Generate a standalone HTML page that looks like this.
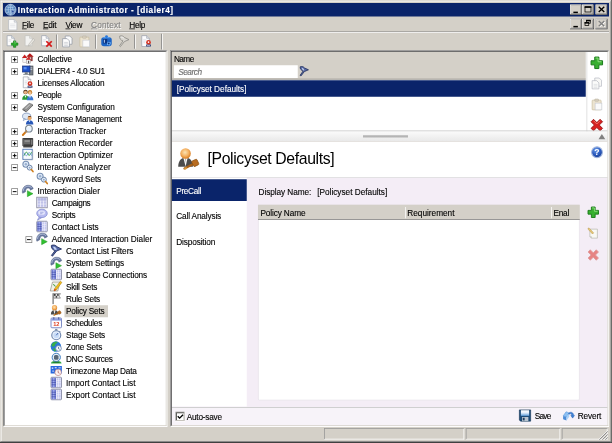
<!DOCTYPE html>
<html><head><meta charset="utf-8"><title>Interaction Administrator - [dialer4]</title>
<style>
html,body{margin:0;padding:0;background:#D4D0C8;}
body{width:612px;height:443px;overflow:hidden;position:relative;}
#w{position:absolute;left:0;top:0;width:816px;height:591px;transform:scale(.75);transform-origin:0 0;font-family:"Liberation Sans",sans-serif;font-size:11px;color:#000;overflow:hidden;}
.t{position:absolute;white-space:nowrap;-webkit-text-stroke:0.15px currentColor;}
.b{font-weight:bold;}
.ic{position:absolute;overflow:visible;}
u{text-decoration:underline;}
</style></head>
<body><div id="w">
<div class="" style="position:absolute;left:0.00px;top:0.00px;width:816.00px;height:591.00px;background:#D4D0C8;"></div>
<div class="" style="position:absolute;left:0.00px;top:0.00px;width:816.00px;height:1.00px;background:#D4D0C8"></div>
<div class="" style="position:absolute;left:0.00px;top:0.00px;width:1.00px;height:591.00px;background:#D4D0C8"></div>
<div class="" style="position:absolute;left:1.00px;top:1.00px;width:814.00px;height:1.00px;background:#fff"></div>
<div class="" style="position:absolute;left:1.00px;top:1.00px;width:1.00px;height:589.00px;background:#fff"></div>
<div class="" style="position:absolute;left:0.00px;top:588.70px;width:816.00px;height:2.50px;background:#404040"></div>
<div class="" style="position:absolute;left:815.00px;top:0.00px;width:1.00px;height:591.00px;background:#404040"></div>
<div class="" style="position:absolute;left:1.00px;top:587.50px;width:814.00px;height:1.20px;background:#808080"></div>
<div class="" style="position:absolute;left:814.00px;top:1.00px;width:1.00px;height:589.00px;background:#808080"></div>
<div class="" style="position:absolute;left:4.00px;top:4.00px;width:808.00px;height:18.00px;background:#0A246A;"></div>
<svg class="ic" style="left:6px;top:5px" width="16" height="16" viewBox="0 0 16 16" ><circle cx="8" cy="8" r="7.300" fill="#5888c0" stroke="#c8d8ec" stroke-width="1"/><path d="M1 8h14M8 1v14M2.500 4c3 1.500 8 1.500 11 0M2.500 12c3-1.500 8-1.500 11 0M8 1c-4 3-4 11 0 14M8 1c4 3 4 11 0 14" stroke="#b8d0ec" stroke-width=".8" fill="none"/><path d="M9 8l5 2-2 1 1.500 2.500-1 .5-1.500-2.500-1.500 1.500z" fill="#2c50a0" stroke="#fff" stroke-width=".4"/></svg>
<span class="t b" id="t0" style="left:23.50px;top:5.20px;line-height:16px;color:#fff;letter-spacing:0.659px;">Interaction Administrator - [dialer4]</span>
<svg class="ic" style="left:760px;top:6px" width="16" height="14" viewBox="0 0 16 14"><rect width="16" height="14" fill="#404040"/><rect width="15" height="13" fill="#fff"/><rect x="1" y="1" width="14" height="12" fill="#808080"/><rect x="1" y="1" width="13" height="11" fill="#D4D0C8"/><g transform="translate(1.500,0.500)"><rect x="3" y="9" width="6" height="2" fill="#000"/></g></svg>
<svg class="ic" style="left:776px;top:6px" width="16" height="14" viewBox="0 0 16 14"><rect width="16" height="14" fill="#404040"/><rect width="15" height="13" fill="#fff"/><rect x="1" y="1" width="14" height="12" fill="#808080"/><rect x="1" y="1" width="13" height="11" fill="#D4D0C8"/><g transform="translate(1.500,0.500)"><rect x="2.500" y="2.500" width="8" height="7" fill="none" stroke="#000"/><rect x="2" y="2" width="9" height="2" fill="#000"/></g></svg>
<svg class="ic" style="left:794px;top:6px" width="16" height="14" viewBox="0 0 16 14"><rect width="16" height="14" fill="#404040"/><rect width="15" height="13" fill="#fff"/><rect x="1" y="1" width="14" height="12" fill="#808080"/><rect x="1" y="1" width="13" height="11" fill="#D4D0C8"/><g transform="translate(1.500,0.500)"><path d="M2.800 2.600l7.400 6.800M10.200 2.600l-7.400 6.800" stroke="#000" stroke-width="1.800"/></g></svg>
<svg class="ic" style="left:8.5px;top:24.5px" width="16" height="16" viewBox="0 0 16 16" ><path d="M2.500 1h7.500l3.500 3.500V15h-11z" fill="#fbfbfb" stroke="#b0b4bc" stroke-width=".9"/><path d="M10 1v3.500h3.500" fill="#e4e6ea" stroke="#b0b4bc" stroke-width=".8"/><path d="M4.500 7h7M4.500 9h7M4.500 11h7" stroke="#dcdee2" stroke-width=".9"/></svg>
<span class="t " id="t1" style="left:29.30px;top:24.70px;line-height:16px;letter-spacing:-0.417px;"><u>F</u>ile</span>
<span class="t " id="t2" style="left:57.30px;top:24.70px;line-height:16px;letter-spacing:-0.323px;"><u>E</u>dit</span>
<span class="t " id="t3" style="left:87.30px;top:24.70px;line-height:16px;letter-spacing:-0.385px;"><u>V</u>iew</span>
<span class="t " id="t4" style="left:121.30px;top:24.70px;line-height:16px;color:#808080;text-shadow:1px 1px 0 #fff;letter-spacing:0.263px;"><u>C</u>ontext</span>
<span class="t " id="t5" style="left:172.30px;top:24.70px;line-height:16px;letter-spacing:-0.380px;"><u>H</u>elp</span>
<svg class="ic" style="left:759.5px;top:25.3px" width="16" height="14" viewBox="0 0 16 14"><rect width="16" height="14" fill="#404040"/><rect width="15" height="13" fill="#fff"/><rect x="1" y="1" width="14" height="12" fill="#808080"/><rect x="1" y="1" width="13" height="11" fill="#D4D0C8"/><g transform="translate(1.500,0.500)"><rect x="3" y="9" width="6" height="2" fill="#000"/></g></svg>
<svg class="ic" style="left:775.5px;top:25.3px" width="16" height="14" viewBox="0 0 16 14"><rect width="16" height="14" fill="#404040"/><rect width="15" height="13" fill="#fff"/><rect x="1" y="1" width="14" height="12" fill="#808080"/><rect x="1" y="1" width="13" height="11" fill="#D4D0C8"/><g transform="translate(1.500,0.500)"><rect x="4.500" y="1.500" width="5" height="4" fill="none" stroke="#000"/><rect x="4" y="1" width="6" height="2" fill="#000"/><rect x="2.500" y="4.500" width="5" height="4" fill="#D4D0C8" stroke="#000"/><rect x="2" y="4" width="6" height="2" fill="#000"/></g></svg>
<svg class="ic" style="left:793.5px;top:25.3px" width="16" height="14" viewBox="0 0 16 14"><rect width="16" height="14" fill="#404040"/><rect width="15" height="13" fill="#fff"/><rect x="1" y="1" width="14" height="12" fill="#808080"/><rect x="1" y="1" width="13" height="11" fill="#D4D0C8"/><g transform="translate(1.500,0.500)"><path d="M3.800 3.600l7.400 6.800M11.200 3.600l-7.400 6.800" stroke="#fff" stroke-width="1.500"/><path d="M2.800 2.600l7.400 6.800M10.200 2.600l-7.400 6.800" stroke="#808080" stroke-width="1.800"/></g></svg>
<div class="" style="position:absolute;left:4.00px;top:42.00px;width:808.00px;height:1.00px;background:#808080"></div>
<div class="" style="position:absolute;left:4.00px;top:43.00px;width:808.00px;height:1.00px;background:#fff"></div>
<svg class="ic" style="left:9.3px;top:47px" width="16" height="16" viewBox="0 0 16 16" ><path d="M0.500 0.500h6l3.500 3.500v10h-9.500z" fill="#fcfcfc" stroke="#98a0ac" stroke-width=".9"/><path d="M6.500 0.500v3.500h3.500" fill="#e0e4ea" stroke="#98a0ac" stroke-width=".8"/><path d="M2.500 6h4M2.500 8h3" stroke="#d0d4da" stroke-width=".8"/><path d="M9 7.500h3v2.800h2.800v3H12v2.800H9v-2.800H6.200v-3H9z" fill="#2cac2c" stroke="#107410" stroke-width=".8" stroke-linejoin="round"/><path d="M9.800 8.500h1.300v2.700" stroke="#90e890" stroke-width=".8" fill="none"/></svg>
<svg class="ic" style="left:33.3px;top:47px" width="16" height="16" viewBox="0 0 16 16" ><path d="M0.500 0.500h6l3.500 3.500v10h-9.500z" fill="#f2f2f0" stroke="#c0c0bc" stroke-width=".9"/><path d="M6.500 0.500v3.500h3.500" fill="#e6e6e2" stroke="#c0c0bc" stroke-width=".8"/><path d="M11.500 4.500l2 1.800-6 7-2.700 1.200.8-2.800z" fill="#e8e6e0" stroke="#b4b2ac" stroke-width=".8"/></svg>
<svg class="ic" style="left:55px;top:47px" width="16" height="16" viewBox="0 0 16 16" ><path d="M0.500 0.500h6l3.500 3.500v10h-9.500z" fill="#fcfcfc" stroke="#98a0ac" stroke-width=".9"/><path d="M6.500 0.500v3.500h3.500" fill="#e0e4ea" stroke="#98a0ac" stroke-width=".8"/><path d="M2.500 6h4M2.500 8h3" stroke="#d0d4da" stroke-width=".8"/><path d="M6.800 8l7.200 7.200M14 8l-7.200 7.200" stroke="#d41818" stroke-width="2.300"/></svg>
<svg class="ic" style="left:82px;top:47px" width="16" height="16" viewBox="0 0 16 16" ><path d="M5 1h6l3 3v8H5z" fill="#fbfbfb" stroke="#8c94a0" stroke-width=".9"/><path d="M1.500 4.500h6l3 3v8h-9z" fill="#fdfdfd" stroke="#8c94a0" stroke-width=".9"/><path d="M3.500 9.500h5M3.500 11.500h5M3.500 13.500h5" stroke="#b8bcc4" stroke-width=".8"/></svg>
<svg class="ic" style="left:105.3px;top:47px" width="16" height="16" viewBox="0 0 16 16" ><rect x="1.500" y="2.500" width="12" height="13" rx="1" fill="#ece4d0" stroke="#c8bc9c" stroke-width=".9"/><rect x="5" y="1" width="5" height="3" rx=".8" fill="#d8d0c0" stroke="#b8b0a0" stroke-width=".7"/><rect x="5.500" y="6.500" width="9" height="9" fill="#fafafa" stroke="#c4c8d0" stroke-width=".8"/></svg>
<svg class="ic" style="left:134px;top:47px" width="16" height="16" viewBox="0 0 16 16" ><rect x="1" y="2.500" width="14" height="12" rx="3.500" fill="#1c64c4"/><path d="M3 4c2-3 8-3 10 0" fill="#58a0f0"/><rect x="3.500" y="5" width="5.500" height="6" rx=".8" fill="#0c3480"/><rect x="4.500" y="6" width="1.300" height="4" fill="#b8d4f8"/><path d="M9.500 8.500l4.500 1-1.500 4-4-1z" fill="#78b8f8"/><circle cx="11" cy="11" r="1.300" fill="#0c3480"/><circle cx="8" cy="1.800" r="1.800" fill="#2c78d8"/></svg>
<svg class="ic" style="left:157.5px;top:47px" width="16" height="16" viewBox="0 0 16 16" ><path d="M1.500 1.200C4 0.200 6.500 1 8 3l6 2.800-6.200 2.700L2.500 15.200l-1.200-1L6 7.500C3 7 1 4 1.500 1.200z" fill="#d8d6d0" stroke="#8c8a86" stroke-width="1.100"/><path d="M3 2.500c1.500-.3 3 .3 4 1.500" stroke="#f8f8f8" stroke-width="1" fill="none"/></svg>
<svg class="ic" style="left:186.5px;top:47px" width="16" height="16" viewBox="0 0 16 16" ><path d="M2 0.500h6.500l3.500 3.500v11H2z" fill="#fbfbfd" stroke="#989ca8" stroke-width=".9"/><path d="M8.500 0.500v3.500h3.500" fill="#dfe3e8" stroke="#989ca8" stroke-width=".8"/><path d="M4 6h4M4 8h3M4 10h2.500" stroke="#d0d4dc" stroke-width=".8"/><circle cx="11" cy="9.500" r="3.200" fill="#d43424"/><circle cx="11" cy="9.200" r="1.100" fill="#fff"/><rect x="7.800" y="12.300" width="6.500" height="2.700" fill="#404c7c"/><rect x="9" y="13" width="4" height="1" fill="#b8c0e0"/></svg>
<div class="" style="position:absolute;left:75.00px;top:45.50px;width:1.00px;height:19.50px;background:#808080"></div>
<div class="" style="position:absolute;left:76.00px;top:45.50px;width:1.00px;height:19.50px;background:#fff"></div>
<div class="" style="position:absolute;left:126.70px;top:45.50px;width:1.00px;height:19.50px;background:#808080"></div>
<div class="" style="position:absolute;left:127.70px;top:45.50px;width:1.00px;height:19.50px;background:#fff"></div>
<div class="" style="position:absolute;left:178.70px;top:45.50px;width:1.00px;height:19.50px;background:#808080"></div>
<div class="" style="position:absolute;left:179.70px;top:45.50px;width:1.00px;height:19.50px;background:#fff"></div>
<div class="" style="position:absolute;left:215.00px;top:44.50px;width:1.00px;height:21.00px;background:#808080"></div>
<div class="" style="position:absolute;left:216.00px;top:44.50px;width:1.00px;height:21.00px;background:#fff"></div>
<div class="" style="position:absolute;left:4.00px;top:66.70px;width:218.70px;height:502.00px;background:#fff;border-top:1px solid #808080;border-left:1px solid #808080;border-bottom:1px solid #fff;border-right:1px solid #fff;box-sizing:border-box;"></div>
<div class="" style="position:absolute;left:5.00px;top:67.70px;width:216.70px;height:500.00px;border-top:1px solid #404040;border-left:1px solid #404040;border-bottom:1px solid #D4D0C8;border-right:1px solid #D4D0C8;box-sizing:border-box;"></div>
<svg class="ic" style="left:15px;top:74.67px" width="9" height="9" viewBox="0 0 9 9"><rect x=".5" y=".5" width="8" height="8" fill="#fff" stroke="#808080"/><path d="M2 4.500h5" stroke="#000" stroke-width="1.300"/><path d="M4.500 2v5" stroke="#000" stroke-width="1.300"/></svg>
<svg class="ic" style="left:29.3px;top:70.36666666666666px" width="16" height="16" viewBox="0 0 16 16" ><rect x="8.500" y="5" width="6" height="6.500" fill="#8c3838"/><rect x="10.500" y="6.500" width="2" height="2.500" fill="#e8d8d8"/><path d="M6 5.800L10.800 1 16 5.800z" fill="#b41818"/><rect x="1.500" y="6.500" width="4.800" height="6.500" fill="#f6f6f6" stroke="#a8a0a0" stroke-width=".6"/><path d="M0.300 7.200L3.800 2.800 7.500 7.200z" fill="#c82020"/><rect x="6.500" y="9" width="5" height="5.500" fill="#f2f2f2" stroke="#989090" stroke-width=".6"/><rect x="8.300" y="11" width="1.600" height="3.500" fill="#585050"/><path d="M5.300 9.600L9 5.800 12.800 9.600z" fill="#d42c2c"/></svg>
<span class="t " id="t6" style="left:50.00px;top:70.67px;line-height:16px;letter-spacing:-0.188px;">Collective</span>
<svg class="ic" style="left:15px;top:90.67px" width="9" height="9" viewBox="0 0 9 9"><rect x=".5" y=".5" width="8" height="8" fill="#fff" stroke="#808080"/><path d="M2 4.500h5" stroke="#000" stroke-width="1.300"/><path d="M4.500 2v5" stroke="#000" stroke-width="1.300"/></svg>
<svg class="ic" style="left:29.3px;top:86.36666666666666px" width="16" height="16" viewBox="0 0 16 16" ><rect x="10" y="2" width="5" height="12" fill="#7a8088" stroke="#40454c" stroke-width=".8"/><rect x="11" y="4" width="3" height="1" fill="#cfd6de"/><rect x="11" y="6" width="3" height="1" fill="#cfd6de"/><rect x="1" y="2" width="10" height="8" fill="#1c50c8" stroke="#203880" stroke-width="1"/><rect x="2.5" y="3.5" width="4" height="3" fill="#5a90f0"/><rect x="4" y="10.5" width="4" height="2" fill="#606870"/><rect x="2" y="12.5" width="8" height="1.5" fill="#9098a0"/></svg>
<span class="t " id="t7" style="left:50.00px;top:86.67px;line-height:16px;letter-spacing:-0.336px;">DIALER4 - 4.0 SU1</span>
<svg class="ic" style="left:29.3px;top:102.36666666666666px" width="16" height="16" viewBox="0 0 16 16" ><path d="M2 0.500h6.500l3.500 3.500v11H2z" fill="#fbfbfd" stroke="#989ca8" stroke-width=".9"/><path d="M8.500 0.500v3.500h3.500" fill="#dfe3e8" stroke="#989ca8" stroke-width=".8"/><path d="M4 6h4M4 8h3M4 10h2.500" stroke="#d0d4dc" stroke-width=".8"/><circle cx="11" cy="9.500" r="3.200" fill="#d43424"/><circle cx="11" cy="9.200" r="1.100" fill="#fff"/><rect x="7.800" y="12.300" width="6.500" height="2.700" fill="#404c7c"/><rect x="9" y="13" width="4" height="1" fill="#b8c0e0"/></svg>
<span class="t " id="t8" style="left:50.00px;top:102.67px;line-height:16px;letter-spacing:-0.237px;">Licenses Allocation</span>
<svg class="ic" style="left:15px;top:122.67px" width="9" height="9" viewBox="0 0 9 9"><rect x=".5" y=".5" width="8" height="8" fill="#fff" stroke="#808080"/><path d="M2 4.500h5" stroke="#000" stroke-width="1.300"/><path d="M4.500 2v5" stroke="#000" stroke-width="1.300"/></svg>
<svg class="ic" style="left:29.3px;top:118.36666666666666px" width="16" height="16" viewBox="0 0 16 16" ><circle cx="5" cy="4.5" r="3" fill="#5a3a20"/><circle cx="5" cy="5.2" r="2.1" fill="#e8b080"/><path d="M0.5 15c0-4 2-6 4.5-6s4.5 2 4.5 6z" fill="#2c9a38"/><path d="M4 9.5l1 3 1-3z" fill="#fff"/><circle cx="11" cy="5" r="2.9" fill="#c07820"/><circle cx="11" cy="5.8" r="2" fill="#f0c090"/><path d="M6.8 15.5c0-4 2-6 4.3-6s4.4 2 4.4 6z" fill="#3a78d0"/><path d="M10 10l1 3 1-3z" fill="#fff"/></svg>
<span class="t " id="t9" style="left:50.00px;top:118.67px;line-height:16px;letter-spacing:-0.393px;">People</span>
<svg class="ic" style="left:15px;top:138.67px" width="9" height="9" viewBox="0 0 9 9"><rect x=".5" y=".5" width="8" height="8" fill="#fff" stroke="#808080"/><path d="M2 4.500h5" stroke="#000" stroke-width="1.300"/><path d="M4.500 2v5" stroke="#000" stroke-width="1.300"/></svg>
<svg class="ic" style="left:29.3px;top:134.36666666666665px" width="16" height="16" viewBox="0 0 16 16" ><path d="M1 11L10 3l5 2-9 9z" fill="#8c8c8c"/><path d="M1 11l5 3v1.5l-5-3z" fill="#4c4c4c"/><path d="M6 14l9-9v1.5l-9 9z" fill="#606060"/><path d="M4 10.5l6-5.500 2 .8-6 5.600z" fill="#b8b8b8"/></svg>
<span class="t " id="t10" style="left:50.00px;top:134.67px;line-height:16px;letter-spacing:-0.099px;">System Configuration</span>
<svg class="ic" style="left:29.3px;top:150.36666666666665px" width="16" height="16" viewBox="0 0 16 16" ><ellipse cx="6.500" cy="5" rx="5.5" ry="4.200" fill="#dfe8f4" stroke="#7088b0" stroke-width=".9"/><path d="M3 8l-1 3 3-2z" fill="#dfe8f4" stroke="#7088b0" stroke-width=".7"/><circle cx="10.5" cy="7.500" r="2.600" fill="#e8a868"/><path d="M8 6.500c.5-2.500 4.500-2.500 5 0-1.500-.8-3.500-.8-5 0z" fill="#70401c"/><path d="M5.500 16c0-4 2.200-5.800 5-5.800s5 1.800 5 5.800z" fill="#2858b8"/><path d="M9.500 10.500l1 2.500 1-2.500z" fill="#fff"/></svg>
<span class="t " id="t11" style="left:50.00px;top:150.67px;line-height:16px;letter-spacing:-0.250px;">Response Management</span>
<svg class="ic" style="left:15px;top:170.67px" width="9" height="9" viewBox="0 0 9 9"><rect x=".5" y=".5" width="8" height="8" fill="#fff" stroke="#808080"/><path d="M2 4.500h5" stroke="#000" stroke-width="1.300"/><path d="M4.500 2v5" stroke="#000" stroke-width="1.300"/></svg>
<svg class="ic" style="left:29.3px;top:166.36666666666665px" width="16" height="16" viewBox="0 0 16 16" ><circle cx="9.500" cy="5.500" r="4.500" fill="#e8f2fc" stroke="#7c8894" stroke-width="1.500"/><path d="M7 4a3 3 0 0 1 3-1.500" stroke="#fff" stroke-width="1.200" fill="none"/><path d="M6 9.200L1.500 14" stroke="#d07818" stroke-width="2.600" stroke-linecap="round"/><path d="M6.200 8.800L4.800 10.400" stroke="#8c8c8c" stroke-width="2.200"/></svg>
<span class="t " id="t12" style="left:50.00px;top:166.67px;line-height:16px;letter-spacing:0.034px;">Interaction Tracker</span>
<svg class="ic" style="left:15px;top:186.67px" width="9" height="9" viewBox="0 0 9 9"><rect x=".5" y=".5" width="8" height="8" fill="#fff" stroke="#808080"/><path d="M2 4.500h5" stroke="#000" stroke-width="1.300"/><path d="M4.500 2v5" stroke="#000" stroke-width="1.300"/></svg>
<svg class="ic" style="left:29.3px;top:182.36666666666665px" width="16" height="16" viewBox="0 0 16 16" ><rect x=".8" y="2" width="14.400" height="11" rx="1" fill="#3c3c3c"/><rect x="3" y="4" width="8.500" height="6.500" fill="#6c6c6c"/><rect x="3.800" y="4.800" width="7" height="2.500" fill="#909090"/><rect x="12.500" y="4" width="1.700" height="7" fill="#888"/><rect x="2" y="13" width="12" height="1.500" fill="#1c1c1c"/><rect x="1" y="3" width="1.200" height="9" fill="#9a9a9a"/></svg>
<span class="t " id="t13" style="left:50.00px;top:182.67px;line-height:16px;letter-spacing:0.017px;">Interaction Recorder</span>
<svg class="ic" style="left:15px;top:202.67px" width="9" height="9" viewBox="0 0 9 9"><rect x=".5" y=".5" width="8" height="8" fill="#fff" stroke="#808080"/><path d="M2 4.500h5" stroke="#000" stroke-width="1.300"/><path d="M4.500 2v5" stroke="#000" stroke-width="1.300"/></svg>
<svg class="ic" style="left:29.3px;top:198.36666666666665px" width="16" height="16" viewBox="0 0 16 16" ><rect x="1.500" y="1" width="12.500" height="13.500" fill="#f8fbfe" stroke="#4c74b4" stroke-width="1.200"/><path d="M14.600 2.500v12.600H3" stroke="#a8b0bc" stroke-width="1" fill="none"/><path d="M3 9.500c2-5.500 4-5.500 5-2.500s3 3 5-2" stroke="#30a040" stroke-width="1.300" fill="none"/><path d="M3 5.500c2 5 4 5 5 2s3-3 5 2" stroke="#5888d0" stroke-width="1" fill="none"/></svg>
<span class="t " id="t14" style="left:50.00px;top:198.67px;line-height:16px;letter-spacing:-0.039px;">Interaction Optimizer</span>
<svg class="ic" style="left:15px;top:218.67px" width="9" height="9" viewBox="0 0 9 9"><rect x=".5" y=".5" width="8" height="8" fill="#fff" stroke="#808080"/><path d="M2 4.500h5" stroke="#000" stroke-width="1.300"/></svg>
<svg class="ic" style="left:29.3px;top:214.36666666666665px" width="16" height="16" viewBox="0 0 16 16" ><circle cx="5.500" cy="5" r="4" fill="#dce8f6" stroke="#7890b4" stroke-width="1.400"/><circle cx="5.500" cy="5" r="1.600" fill="#9ab0d0"/><circle cx="10.500" cy="9.500" r="3.300" fill="#e4eef8" stroke="#6c84a8" stroke-width="1.300"/><circle cx="10.500" cy="9.500" r="1.200" fill="#8ca4c8"/><path d="M12.800 12l2.200 2.700" stroke="#d08020" stroke-width="2.200" stroke-linecap="round"/></svg>
<span class="t " id="t15" style="left:50.00px;top:214.67px;line-height:16px;letter-spacing:0.057px;">Interaction Analyzer</span>
<svg class="ic" style="left:48.3px;top:230.36666666666665px" width="16" height="16" viewBox="0 0 16 16" ><circle cx="5.500" cy="5" r="4" fill="#dce8f6" stroke="#7890b4" stroke-width="1.400"/><circle cx="5.500" cy="5" r="1.600" fill="#9ab0d0"/><circle cx="10.500" cy="9.500" r="3.300" fill="#e4eef8" stroke="#6c84a8" stroke-width="1.300"/><circle cx="10.500" cy="9.500" r="1.200" fill="#8ca4c8"/><path d="M12.800 12l2.200 2.700" stroke="#d08020" stroke-width="2.200" stroke-linecap="round"/></svg>
<span class="t " id="t16" style="left:69.00px;top:230.67px;line-height:16px;letter-spacing:-0.170px;">Keyword Sets</span>
<svg class="ic" style="left:15px;top:250.67px" width="9" height="9" viewBox="0 0 9 9"><rect x=".5" y=".5" width="8" height="8" fill="#fff" stroke="#808080"/><path d="M2 4.500h5" stroke="#000" stroke-width="1.300"/></svg>
<svg class="ic" style="left:29.3px;top:246.36666666666665px" width="16" height="16" viewBox="0 0 16 16" ><path d="M0.800 10.500C0.500 4.500 4 1 8.500 1c3.500 0 6 1.500 6.800 4.500l-3.800 2c-.3-1.800-1.300-2.800-3-2.800-2.200 0-3.500 1.800-3.500 5l-3.800 2z" fill="#6878a0" stroke="#485878" stroke-width=".6"/><path d="M2 8.500c.2-3.800 2.800-6.300 6.300-6.300 2 0 3.800.7 5 2.300" stroke="#b0bcd8" stroke-width="1.300" fill="none"/><path d="M7.500 8.200l7.500 4-7.500 4z" fill="#30c030" stroke="#189018" stroke-width=".6"/></svg>
<span class="t " id="t17" style="left:50.00px;top:246.67px;line-height:16px;letter-spacing:0.008px;">Interaction Dialer</span>
<svg class="ic" style="left:48.3px;top:262.3666666666666px" width="16" height="16" viewBox="0 0 16 16" ><rect x="1" y="1" width="14" height="14" fill="#fdfdff" stroke="#8c8ca4" stroke-width="1.200"/><g fill="#c0c2ea"><rect x="2.200" y="2.200" width="3.400" height="3.400"/><rect x="6.300" y="2.200" width="3.400" height="3.400"/><rect x="10.400" y="2.200" width="3.400" height="3.400"/><rect x="2.200" y="6.300" width="3.400" height="3.400"/><rect x="6.300" y="6.300" width="3.400" height="3.400"/><rect x="10.400" y="6.300" width="3.400" height="3.400"/><rect x="2.200" y="10.400" width="3.400" height="3.400"/><rect x="6.300" y="10.400" width="3.400" height="3.400"/><rect x="10.400" y="10.400" width="3.400" height="3.400"/></g><rect x="2.200" y="2.200" width="11.600" height="3.400" fill="#a8acdc" opacity=".6"/></svg>
<span class="t " id="t18" style="left:69.00px;top:262.67px;line-height:16px;letter-spacing:-0.455px;">Campaigns</span>
<svg class="ic" style="left:48.3px;top:278.3666666666666px" width="16" height="16" viewBox="0 0 16 16" ><path d="M4 11.500l-2 4 5.500-3.200z" fill="#b4b8ec" stroke="#8088cc" stroke-width=".9"/><ellipse cx="8" cy="6.500" rx="7" ry="5.600" fill="#b8bcf0" stroke="#8890d4" stroke-width="1.100"/><ellipse cx="7.500" cy="5.500" rx="4.500" ry="3" fill="#e4e6fc"/><path d="M5.500 5h4.500M5.500 7h3" stroke="#8890d4" stroke-width=".9"/></svg>
<span class="t " id="t19" style="left:69.00px;top:278.67px;line-height:16px;letter-spacing:-0.271px;">Scripts</span>
<svg class="ic" style="left:48.3px;top:294.3666666666666px" width="16" height="16" viewBox="0 0 16 16" ><rect x="1" y="1" width="14" height="14" rx="1" fill="#f4f4fc" stroke="#7c809c" stroke-width="1.100"/><rect x="1.800" y="1.800" width="5.700" height="12.400" fill="#5c68c8"/><rect x="3.200" y="1.800" width="2.600" height="12.400" fill="#9ca8ec"/><path d="M1.800 5h5.700M1.800 8h5.700M1.800 11h5.700" stroke="#3c48a0" stroke-width=".8"/><g fill="#c4c8f0"><rect x="8.500" y="2.300" width="5.500" height="2.600"/><rect x="8.500" y="5.500" width="5.500" height="2.600"/><rect x="8.500" y="8.700" width="5.500" height="2.600"/><rect x="8.500" y="11.800" width="5.500" height="2"/></g><rect x="10.900" y="1.800" width=".8" height="12.400" fill="#f4f4fc"/></svg>
<span class="t " id="t20" style="left:69.00px;top:294.67px;line-height:16px;letter-spacing:-0.091px;">Contact Lists</span>
<svg class="ic" style="left:34px;top:314.67px" width="9" height="9" viewBox="0 0 9 9"><rect x=".5" y=".5" width="8" height="8" fill="#fff" stroke="#808080"/><path d="M2 4.500h5" stroke="#000" stroke-width="1.300"/></svg>
<svg class="ic" style="left:48.3px;top:310.3666666666666px" width="16" height="16" viewBox="0 0 16 16" ><path d="M0.800 10.500C0.500 4.500 4 1 8.500 1c3.500 0 6 1.500 6.800 4.500l-3.800 2c-.3-1.800-1.300-2.800-3-2.800-2.200 0-3.500 1.800-3.500 5l-3.800 2z" fill="#6878a0" stroke="#485878" stroke-width=".6"/><path d="M2 8.500c.2-3.800 2.800-6.300 6.300-6.300 2 0 3.800.7 5 2.300" stroke="#b0bcd8" stroke-width="1.300" fill="none"/><path d="M7.500 8.200l7.500 4-7.500 4z" fill="#30c030" stroke="#189018" stroke-width=".6"/></svg>
<span class="t " id="t21" style="left:69.00px;top:310.67px;line-height:16px;letter-spacing:-0.044px;">Advanced Interaction Dialer</span>
<svg class="ic" style="left:67.3px;top:326.3666666666666px" width="16" height="16" viewBox="0 0 16 16" ><path d="M1.500 1.200C4.500 0 7.500 1 9 3l6 3-6.500 2.700L3 15.500l-1.400-1L6.500 8C3 7.500 1 4.500 1.500 1.200z" fill="#5468a8" stroke="#263260" stroke-width="1.200"/><path d="M3.500 3c1.800-.5 3.200.3 4.200 1.500l1.300 2.300-3 .5z" fill="#c4d2f2"/></svg>
<span class="t " id="t22" style="left:88.00px;top:326.67px;line-height:16px;letter-spacing:-0.058px;">Contact List Filters</span>
<svg class="ic" style="left:67.3px;top:342.3666666666666px" width="16" height="16" viewBox="0 0 16 16" ><path d="M0.800 10.500C0.500 4.500 4 1 8.500 1c3.500 0 6 1.500 6.800 4.500l-3.800 2c-.3-1.800-1.300-2.800-3-2.800-2.200 0-3.500 1.800-3.500 5l-3.800 2z" fill="#6878a0" stroke="#485878" stroke-width=".6"/><path d="M2 8.500c.2-3.800 2.800-6.300 6.300-6.300 2 0 3.800.7 5 2.300" stroke="#b0bcd8" stroke-width="1.300" fill="none"/><path d="M7.500 8.200l7.500 4-7.500 4z" fill="#30c030" stroke="#189018" stroke-width=".6"/></svg>
<span class="t " id="t23" style="left:88.00px;top:342.67px;line-height:16px;letter-spacing:-0.142px;">System Settings</span>
<svg class="ic" style="left:67.3px;top:358.3666666666666px" width="16" height="16" viewBox="0 0 16 16" ><rect x="1" y="1" width="14" height="14" rx="1" fill="#f4f4fc" stroke="#7c809c" stroke-width="1.100"/><rect x="1.800" y="1.800" width="5.700" height="12.400" fill="#5c68c8"/><rect x="3.200" y="1.800" width="2.600" height="12.400" fill="#9ca8ec"/><path d="M1.800 5h5.700M1.800 8h5.700M1.800 11h5.700" stroke="#3c48a0" stroke-width=".8"/><g fill="#c4c8f0"><rect x="8.500" y="2.300" width="5.500" height="2.600"/><rect x="8.500" y="5.500" width="5.500" height="2.600"/><rect x="8.500" y="8.700" width="5.500" height="2.600"/><rect x="8.500" y="11.800" width="5.500" height="2"/></g><rect x="10.900" y="1.800" width=".8" height="12.400" fill="#f4f4fc"/></svg>
<span class="t " id="t24" style="left:88.00px;top:358.67px;line-height:16px;letter-spacing:-0.158px;">Database Connections</span>
<svg class="ic" style="left:67.3px;top:374.3666666666666px" width="16" height="16" viewBox="0 0 16 16" ><path d="M3 2h10l-3 12H0z" fill="#f0f0e8" stroke="#8c8c80" stroke-width=".9"/><path d="M13.500 1l2 1.500-7.500 10-3 1.500.8-3z" fill="#f0c020" stroke="#a87810" stroke-width=".7"/><path d="M5.800 11l-.8 3 3-1.500z" fill="#d83020"/><path d="M4 5l3 3" stroke="#40a040" stroke-width="1.400"/></svg>
<span class="t " id="t25" style="left:88.00px;top:374.67px;line-height:16px;letter-spacing:-0.394px;">Skill Sets</span>
<svg class="ic" style="left:67.3px;top:390.3666666666666px" width="16" height="16" viewBox="0 0 16 16" ><rect x="3" y="1" width="1.600" height="14.500" fill="#707070"/><path d="M4.600 1.500h9l-2 3 2 3h-9z" fill="#e8e8e8" stroke="#606060" stroke-width=".8"/><rect x="5" y="2" width="2.200" height="2.500" fill="#404040"/><rect x="9.200" y="2" width="2" height="2.500" fill="#404040"/><rect x="7.200" y="4.500" width="2" height="2.500" fill="#404040"/></svg>
<span class="t " id="t26" style="left:88.00px;top:390.67px;line-height:16px;letter-spacing:-0.263px;">Rule Sets</span>
<svg class="ic" style="left:67.3px;top:406.3666666666666px" width="16" height="16" viewBox="0 0 16 16" ><defs><radialGradient id="pg" cx=".45" cy=".4" r=".6"><stop offset="0" stop-color="#fce4b4"/><stop offset=".6" stop-color="#f4b060"/><stop offset="1" stop-color="#d87c20"/></radialGradient></defs><path d="M0.800 13.200c0-3.800 1.800-6 4.900-6s4.900 2.200 4.900 6z" fill="#4c4c4c"/><path d="M4.300 7.400l1.400 5.600 1.400-5.600z" fill="#f8f8f8"/><path d="M5.300 7.600l.4 3 .4-3z" fill="#b0b0b0"/><circle cx="5.700" cy="4.300" r="3.500" fill="url(#pg)"/><path d="M5 14.300l6.500-3.300" stroke="#a86018" stroke-width="1.500" stroke-linecap="round"/><rect x="10.300" y="8.600" width="3.800" height="4" rx=".7" fill="#b86c20" stroke="#8c5010" stroke-width=".5" transform="rotate(-25 12.200 10.600)"/><path d="M5 14.600l1.500-.7" stroke="#e0a040" stroke-width="1.200"/></svg>
<div class="" style="position:absolute;left:86.00px;top:407.17px;width:58.00px;height:15.50px;background:#D4D0C8;"></div>
<span class="t " id="t27" style="left:88.00px;top:406.67px;line-height:16px;letter-spacing:-0.292px;">Policy Sets</span>
<svg class="ic" style="left:67.3px;top:422.3666666666666px" width="16" height="16" viewBox="0 0 16 16" ><rect x="1" y="2" width="14" height="13" rx="1.200" fill="#fcfcff" stroke="#7080c0" stroke-width="1.200"/><rect x="1.500" y="2.500" width="13" height="3" fill="#8c9ce0"/><rect x="4" y="1" width="1.500" height="3" fill="#5060a0"/><rect x="10.500" y="1" width="1.500" height="3" fill="#5060a0"/><text x="8" y="13" font-family="Liberation Sans,sans-serif" font-size="7.500" font-weight="bold" fill="#e04020" text-anchor="middle">12</text></svg>
<span class="t " id="t28" style="left:88.00px;top:422.67px;line-height:16px;letter-spacing:-0.372px;">Schedules</span>
<svg class="ic" style="left:67.3px;top:438.3666666666666px" width="16" height="16" viewBox="0 0 16 16" ><rect x="6.500" y="0.500" width="3" height="2.500" fill="#8090a8"/><path d="M12 3.500l1.500 1.500" stroke="#8090a8" stroke-width="1.500"/><circle cx="8" cy="9" r="6" fill="#e8f0fc" stroke="#7088b0" stroke-width="1.500"/><circle cx="8" cy="9" r="3.800" fill="#c8dcf8"/><path d="M8 9l2.500-3" stroke="#3858a0" stroke-width="1.200"/></svg>
<span class="t " id="t29" style="left:88.00px;top:438.67px;line-height:16px;letter-spacing:-0.170px;">Stage Sets</span>
<svg class="ic" style="left:67.3px;top:454.3666666666666px" width="16" height="16" viewBox="0 0 16 16" ><circle cx="7.500" cy="8" r="7" fill="#2c78d8"/><path d="M3 3.500c2-2 5-2.500 7-1.500-1 2-3 2-3.500 4S4 8.500 2 7.500c-.5-1.500 0-3 1-4z" fill="#38b048"/><path d="M4 11c1.500-1 3-.5 3.500 1s-.5 2.500-1.500 2.800C4.800 14 4 12.500 4 11z" fill="#38b048"/><circle cx="11" cy="10.500" r="3.800" fill="#f4f8fc" stroke="#5878a8" stroke-width="1"/><path d="M11 8.500v2.200l1.500 1" stroke="#304878" stroke-width=".9" fill="none"/></svg>
<span class="t " id="t30" style="left:88.00px;top:454.67px;line-height:16px;letter-spacing:-0.218px;">Zone Sets</span>
<svg class="ic" style="left:67.3px;top:470.3666666666666px" width="16" height="16" viewBox="0 0 16 16" ><path d="M1 14.500c0-2 2-3 3-3h8c1 0 3 1 3 3z" fill="#30a848"/><circle cx="8" cy="6.500" r="5.500" fill="#e4ecf4" stroke="#3c7cc0" stroke-width="1.300"/><path d="M5 4.500c1-1.500 5-1.500 6 0v4c-1 1.500-5 1.500-6 0z" fill="#586878"/><path d="M4 13h8" stroke="#186c28" stroke-width="1.200"/></svg>
<span class="t " id="t31" style="left:88.00px;top:470.67px;line-height:16px;letter-spacing:-0.475px;">DNC Sources</span>
<svg class="ic" style="left:67.3px;top:486.3666666666666px" width="16" height="16" viewBox="0 0 16 16" ><rect x=".5" y="2" width="15" height="10" fill="#2868e0"/><path d="M2 4h2v1.500H2zM6 3.500h2.500V5H6zM11 4h3v1H11zM3 8h1.500v1.500H3z" fill="#f4f8ff"/><circle cx="10.500" cy="10.500" r="4.300" fill="#fcf4f4" stroke="#c08888" stroke-width="1"/><path d="M10.500 8v2.700l1.800 1" stroke="#a04040" stroke-width=".9" fill="none"/></svg>
<span class="t " id="t32" style="left:88.00px;top:486.67px;line-height:16px;letter-spacing:-0.253px;">Timezone Map Data</span>
<svg class="ic" style="left:67.3px;top:502.3666666666666px" width="16" height="16" viewBox="0 0 16 16" ><rect x="1" y="1" width="14" height="14" rx="1" fill="#f4f4fc" stroke="#7c809c" stroke-width="1.100"/><rect x="1.800" y="1.800" width="5.700" height="12.400" fill="#5c68c8"/><rect x="3.200" y="1.800" width="2.600" height="12.400" fill="#9ca8ec"/><path d="M1.800 5h5.700M1.800 8h5.700M1.800 11h5.700" stroke="#3c48a0" stroke-width=".8"/><g fill="#c4c8f0"><rect x="8.500" y="2.300" width="5.500" height="2.600"/><rect x="8.500" y="5.500" width="5.500" height="2.600"/><rect x="8.500" y="8.700" width="5.500" height="2.600"/><rect x="8.500" y="11.800" width="5.500" height="2"/></g><rect x="10.900" y="1.800" width=".8" height="12.400" fill="#f4f4fc"/></svg>
<span class="t " id="t33" style="left:88.00px;top:502.67px;line-height:16px;letter-spacing:0.015px;">Import Contact List</span>
<svg class="ic" style="left:67.3px;top:518.3666666666667px" width="16" height="16" viewBox="0 0 16 16" ><rect x="1" y="1" width="14" height="14" rx="1" fill="#f4f4fc" stroke="#7c809c" stroke-width="1.100"/><rect x="1.800" y="1.800" width="5.700" height="12.400" fill="#5c68c8"/><rect x="3.200" y="1.800" width="2.600" height="12.400" fill="#9ca8ec"/><path d="M1.800 5h5.700M1.800 8h5.700M1.800 11h5.700" stroke="#3c48a0" stroke-width=".8"/><g fill="#c4c8f0"><rect x="8.500" y="2.300" width="5.500" height="2.600"/><rect x="8.500" y="5.500" width="5.500" height="2.600"/><rect x="8.500" y="8.700" width="5.500" height="2.600"/><rect x="8.500" y="11.800" width="5.500" height="2"/></g><rect x="10.900" y="1.800" width=".8" height="12.400" fill="#f4f4fc"/></svg>
<span class="t " id="t34" style="left:88.00px;top:518.67px;line-height:16px;letter-spacing:-0.019px;">Export Contact List</span>
<div class="" style="position:absolute;left:226.70px;top:66.70px;width:585.30px;height:502.00px;background:#fff;border-top:1px solid #808080;border-left:1px solid #808080;border-bottom:1px solid #fff;border-right:1px solid #fff;box-sizing:border-box;"></div>
<div class="" style="position:absolute;left:228.70px;top:68.70px;width:552.80px;height:37.00px;background:#D4D0C8;"></div>
<div class="" style="position:absolute;left:228.70px;top:104.80px;width:552.80px;height:1.70px;background:#868480;"></div>
<span class="t " id="t35" style="left:232.00px;top:70.70px;line-height:16px;letter-spacing:-0.781px;">Name</span>
<div class="" style="position:absolute;left:232.00px;top:87.30px;width:165.00px;height:16.70px;background:#fff;"></div>
<span class="t " id="t36" style="left:237.50px;top:87.70px;line-height:16px;font-style:italic;color:#6c6c6c;letter-spacing:-0.572px;">Search</span>
<svg class="ic" style="left:398.5px;top:87.5px" width="14" height="14" viewBox="0 0 16 16" ><path d="M1.500 1.200C4 0.200 6.500 1 8 3l6 2.800-6.200 2.700L2.500 15.200l-1.200-1L6 7.500C3 7 1 4 1.500 1.200z" fill="#586aa4" stroke="#263260" stroke-width="1.300"/><path d="M3.800 3.200c1.300-.3 2.200.3 3 1.300l.8 2-2 .3z" fill="#c8d4f0"/></svg>
<div class="" style="position:absolute;left:228.70px;top:107.30px;width:552.80px;height:22.00px;background:#0A246A;"></div>
<span class="t " id="t37" style="left:235.70px;top:110.30px;line-height:16px;color:#fff;letter-spacing:-0.029px;">[Policyset Defaults]</span>
<div class="" style="position:absolute;left:781.50px;top:68.70px;width:1.00px;height:107.00px;background:#D8D8D8;"></div>
<svg class="ic" style="left:787.25px;top:74.75px" width="17.5" height="17.5" viewBox="0 0 16 16" ><path d="M5.500 1h5v4.500H15v5h-4.500V15h-5v-4.500H1v-5h4.500z" fill="#38b030" stroke="#187818" stroke-width="1.200" stroke-linejoin="round"/><path d="M6.500 2.200h3v4.500h4.200" stroke="#90e080" stroke-width="1.200" fill="none"/></svg>
<svg class="ic" style="left:788.0px;top:103.0px" width="16" height="16" viewBox="0 0 16 16" ><path d="M5 1h6l3 3v8H5z" fill="#f8f8f6" stroke="#b4b8c0" stroke-width=".9"/><path d="M1.500 4.500h6l3 3v8h-9z" fill="#fbfbfa" stroke="#b4b8c0" stroke-width=".9"/><path d="M3.500 9.500h5M3.500 11.500h5M3.500 13.500h5" stroke="#d4d6da" stroke-width=".8"/></svg>
<svg class="ic" style="left:788.0px;top:131.0px" width="16" height="16" viewBox="0 0 16 16" ><rect x="1.500" y="2.500" width="12" height="13" rx="1" fill="#ece4d0" stroke="#c8bc9c" stroke-width=".9"/><rect x="5" y="1" width="5" height="3" rx=".8" fill="#d8d0c0" stroke="#b8b0a0" stroke-width=".7"/><rect x="5.500" y="6.500" width="9" height="9" fill="#fafafa" stroke="#c4c8d0" stroke-width=".8"/></svg>
<svg class="ic" style="left:787.25px;top:157.75px" width="17.5" height="17.5" viewBox="0 0 16 16" ><path d="M1 4L4 1 8 5 12 1 15 4 11 8 15 12 12 15 8 11 4 15 1 12 5 8z" fill="#d82020" stroke="#901010" stroke-width="1" stroke-linejoin="round"/><path d="M4 2.700L8 6.700l4-4" stroke="#f47868" stroke-width="1.100" fill="none"/></svg>
<div class="" style="position:absolute;left:228.70px;top:174.30px;width:581.60px;height:15.20px;background:linear-gradient(#FBFBFB,#E9E9E9);border-top:1px solid #C4C4C4;border-bottom:1px solid #DCD8D4;box-sizing:border-box;"></div>
<div class="" style="position:absolute;left:484.00px;top:179.80px;width:60.00px;height:1.20px;background:#B4B4B4"></div>
<div class="" style="position:absolute;left:484.00px;top:182.30px;width:60.00px;height:1.20px;background:#787878"></div>
<svg class="ic" style="left:797.5px;top:178px" width="9" height="8" viewBox="0 0 9 8"><path d="M4.500 0.500L9 7.500H0z" fill="#808080"/></svg>
<svg class="ic" style="left:236px;top:195.5px" width="32" height="32" viewBox="0 0 16 16" ><defs><radialGradient id="pg" cx=".45" cy=".4" r=".6"><stop offset="0" stop-color="#fce4b4"/><stop offset=".6" stop-color="#f4b060"/><stop offset="1" stop-color="#d87c20"/></radialGradient></defs><path d="M0.800 13.200c0-3.800 1.800-6 4.900-6s4.900 2.200 4.900 6z" fill="#4c4c4c"/><path d="M4.300 7.400l1.400 5.600 1.400-5.600z" fill="#f8f8f8"/><path d="M5.300 7.600l.4 3 .4-3z" fill="#b0b0b0"/><circle cx="5.700" cy="4.300" r="3.500" fill="url(#pg)"/><path d="M5 14.300l6.500-3.300" stroke="#a86018" stroke-width="1.500" stroke-linecap="round"/><rect x="10.300" y="8.600" width="3.800" height="4" rx=".7" fill="#b86c20" stroke="#8c5010" stroke-width=".5" transform="rotate(-25 12.200 10.600)"/><path d="M5 14.600l1.500-.7" stroke="#e0a040" stroke-width="1.200"/></svg>
<span class="t " id="t38" style="left:276.70px;top:198.30px;line-height:26px;font-size:21px;-webkit-text-stroke:0;letter-spacing:-0.478px;">[Policyset Defaults]</span>
<svg class="ic" style="left:788px;top:195px" width="16" height="16" viewBox="0 0 16 16" ><defs><radialGradient id="hg" cx=".4" cy=".3" r=".75"><stop offset="0" stop-color="#6c9ce8"/><stop offset=".55" stop-color="#2c5cc0"/><stop offset="1" stop-color="#183c90"/></radialGradient></defs><circle cx="8" cy="8" r="7.200" fill="url(#hg)" stroke="#a4b8e0" stroke-width="1.400"/><text x="8" y="12.200" font-family="Liberation Sans,sans-serif" font-size="11.500" font-weight="bold" fill="#fff" text-anchor="middle">?</text></svg>
<div class="" style="position:absolute;left:228.70px;top:236.00px;width:581.60px;height:1.20px;background:#D0D0D0;"></div>
<div class="" style="position:absolute;left:228.70px;top:237.20px;width:581.60px;height:305.50px;background:#F4EDF6;"></div>
<div class="" style="position:absolute;left:228.70px;top:237.20px;width:100.30px;height:305.00px;background:#fff;"></div>
<div class="" style="position:absolute;left:228.70px;top:238.70px;width:100.30px;height:29.60px;background:#0A246A;"></div>
<span class="t " id="t39" style="left:235.00px;top:246.00px;line-height:16px;color:#fff;letter-spacing:-0.430px;">PreCall</span>
<span class="t " id="t40" style="left:235.00px;top:279.70px;line-height:16px;letter-spacing:-0.197px;">Call Analysis</span>
<span class="t " id="t41" style="left:235.00px;top:313.70px;line-height:16px;letter-spacing:-0.181px;">Disposition</span>
<span class="t " id="t42" style="left:344.70px;top:248.00px;line-height:16px;letter-spacing:-0.086px;">Display Name:</span>
<span class="t " id="t43" style="left:423.00px;top:248.00px;line-height:16px;letter-spacing:-0.013px;">[Policyset Defaults]</span>
<div class="" style="position:absolute;left:343.70px;top:273.00px;width:429.60px;height:261.30px;background:#fff;border:1px solid #E6E2EA;border-radius:0 0 2px 2px;box-sizing:border-box;"></div>
<div class="" style="position:absolute;left:343.70px;top:273.00px;width:429.60px;height:19.70px;background:#D4D0C8;border-bottom:1.800px solid #808080;box-sizing:border-box;"></div>
<div class="" style="position:absolute;left:539.50px;top:275.50px;width:1.00px;height:15.00px;background:#fff"></div>
<div class="" style="position:absolute;left:735.30px;top:275.50px;width:1.00px;height:15.00px;background:#fff"></div>
<span class="t " id="t44" style="left:347.30px;top:276.00px;line-height:16px;letter-spacing:-0.175px;">Policy Name</span>
<span class="t " id="t45" style="left:543.00px;top:276.00px;line-height:16px;letter-spacing:0.002px;">Requirement</span>
<span class="t " id="t46" style="left:738.00px;top:276.00px;line-height:16px;letter-spacing:-0.344px;">Enal</span>
<svg class="ic" style="left:783px;top:274.5px" width="16" height="16" viewBox="0 0 16 16" ><path d="M5.500 1h5v4.500H15v5h-4.500V15h-5v-4.500H1v-5h4.500z" fill="#38b030" stroke="#187818" stroke-width="1.200" stroke-linejoin="round"/><path d="M6.500 2.200h3v4.500h4.200" stroke="#90e080" stroke-width="1.200" fill="none"/></svg>
<svg class="ic" style="left:783px;top:302.5px" width="16" height="16" viewBox="0 0 16 16" ><path d="M3.500 2.500h10v12h-8l-2-2z" fill="#f8f8f4" stroke="#b4b4ac" stroke-width=".9"/><path d="M3.500 12.500h2v2" fill="#dcdcd4" stroke="#b4b4ac" stroke-width=".7"/><path d="M1 1l2 .5 5.500 6-1.500 1.500-5.500-6z" fill="#e8c870" stroke="#b89850" stroke-width=".7"/></svg>
<svg class="ic" style="left:783px;top:331.5px" width="16" height="16" viewBox="0 0 16 16" ><path d="M1 4L4 1 8 5 12 1 15 4 11 8 15 12 12 15 8 11 4 15 1 12 5 8z" fill="#e68484" stroke="#dc9c9c" stroke-width="1" stroke-linejoin="round"/></svg>
<div class="" style="position:absolute;left:228.70px;top:542.70px;width:581.60px;height:1.00px;background:#C0C0C0;"></div>
<div class="" style="position:absolute;left:228.70px;top:543.70px;width:581.60px;height:24.00px;background:#F7F3F9;"></div>
<svg class="ic" style="left:234px;top:548.5px" width="13" height="13" viewBox="0 0 13 13"><rect width="13" height="13" fill="#fff"/><rect width="12" height="12" fill="#808080"/><rect x="1" y="1" width="11" height="11" fill="#D4D0C8"/><rect x="1" y="1" width="10" height="10" fill="#404040"/><rect x="2" y="2" width="9" height="9" fill="#fff"/><path d="M3 6l2.500 2.500L10 4" stroke="#000" stroke-width="1.800" fill="none"/></svg>
<span class="t " id="t47" style="left:249.00px;top:547.70px;line-height:16px;letter-spacing:-0.316px;">Auto-save</span>
<svg class="ic" style="left:691.7px;top:546px" width="16" height="16" viewBox="0 0 16 16" ><defs><linearGradient id="sg" x1="0" y1="0" x2="0" y2="1"><stop offset="0" stop-color="#ffffff"/><stop offset=".45" stop-color="#e4f0fc"/><stop offset="1" stop-color="#5c9cd8"/></linearGradient></defs><path d="M0.500 0.500h15v15H2L0.500 14z" fill="#1c4c78" stroke="#103050" stroke-width=".8"/><rect x="2.500" y="1" width="11" height="7.500" fill="url(#sg)"/><rect x="4" y="10" width="8.500" height="5.500" fill="#b8c4d0"/><rect x="5" y="11" width="2.500" height="3.500" fill="#1c3c5c"/></svg>
<span class="t " id="t48" style="left:713.00px;top:546.70px;line-height:16px;letter-spacing:-1.026px;">Save</span>
<svg class="ic" style="left:750.3px;top:546px" width="16" height="16" viewBox="0 0 16 16" ><path d="M0.800 8.500l4-5.500 4 1.500-3.500 5.500z" fill="#8cc0f4" stroke="#4888d0" stroke-width=".6"/><path d="M0.800 8.500v4.500l4.500 1.500V10z" fill="#4c8cd8"/><path d="M5.300 10v4.500L9 9.500 8.800 4.500z" fill="#a8d0f8"/><path d="M8 5c3-3 7-1 7 3l1 0-2.500 3.500L11 8h1.300c0-2-2-3-3.800-1.500z" fill="#3c80d4" stroke="#2458a8" stroke-width=".5"/></svg>
<span class="t " id="t49" style="left:770.30px;top:546.70px;line-height:16px;letter-spacing:-0.181px;">Revert</span>
<div class="" style="position:absolute;left:227.70px;top:67.70px;width:583.30px;height:500.00px;border-top:1px solid #404040;border-left:1px solid #404040;border-bottom:1px solid #D4D0C8;border-right:1px solid #D4D0C8;box-sizing:border-box;"></div>
<div class="" style="position:absolute;left:432.00px;top:570.70px;width:187.30px;height:15.00px;border-top:1px solid #949494;border-left:1px solid #949494;border-bottom:1px solid #fff;border-right:1px solid #fff;box-sizing:border-box;"></div>
<div class="" style="position:absolute;left:621.30px;top:570.70px;width:125.40px;height:15.00px;border-top:1px solid #949494;border-left:1px solid #949494;border-bottom:1px solid #fff;border-right:1px solid #fff;box-sizing:border-box;"></div>
<div class="" style="position:absolute;left:749.30px;top:570.70px;width:60.70px;height:15.00px;border-top:1px solid #949494;border-left:1px solid #949494;border-bottom:1px solid #fff;border-right:1px solid #fff;box-sizing:border-box;"></div>
<svg class="ic" style="left:798px;top:574px" width="13" height="13" viewBox="0 0 13 13"><path d="M12 1L1 12M12 5L5 12M12 9L9 12" stroke="#808080" stroke-width="1.400"/><path d="M12 0L0 12M12 4L4 12M12 8L8 12" stroke="#fff" stroke-width="1"/></svg>
</div></body></html>
